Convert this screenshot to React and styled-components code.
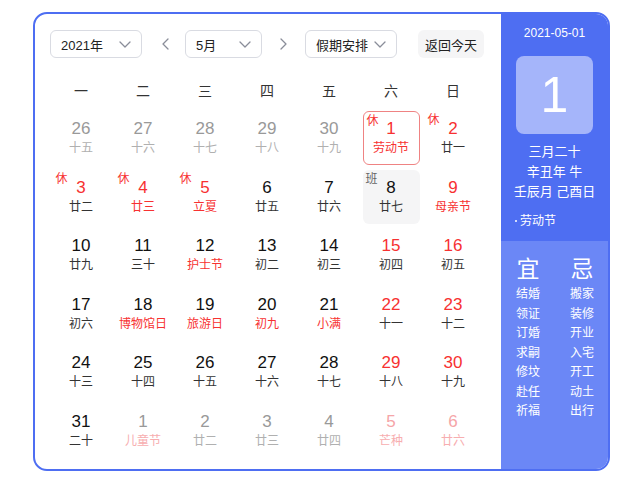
import React from "react";
import styled, { createGlobalStyle } from "styled-components";

const GlobalStyle = createGlobalStyle`
  html, body {
    margin: 0;
    padding: 0;
    background: #fff;
  }
  body {
    font-family: "Liberation Sans", "Noto Sans CJK SC", sans-serif;
    color: #222;
  }
`;

const RED = "#f73131";

const weekdays = ["一", "二", "三", "四", "五", "六", "日"];

// other = prev/next month; red = holiday/weekend number; lunarRed = festival text
const days = [
  { d: 26, l: "十五", other: true },
  { d: 27, l: "十六", other: true },
  { d: 28, l: "十七", other: true },
  { d: 29, l: "十八", other: true },
  { d: 30, l: "十九", other: true },
  { d: 1, l: "劳动节", red: true, lunarRed: true, tag: "休", selected: true },
  { d: 2, l: "廿一", red: true, tag: "休" },
  { d: 3, l: "廿二", red: true, tag: "休" },
  { d: 4, l: "廿三", red: true, lunarRed: true, tag: "休" },
  { d: 5, l: "立夏", red: true, lunarRed: true, tag: "休" },
  { d: 6, l: "廿五" },
  { d: 7, l: "廿六" },
  { d: 8, l: "廿七", tag: "班", work: true },
  { d: 9, l: "母亲节", red: true, lunarRed: true },
  { d: 10, l: "廿九" },
  { d: 11, l: "三十" },
  { d: 12, l: "护士节", lunarRed: true },
  { d: 13, l: "初二" },
  { d: 14, l: "初三" },
  { d: 15, l: "初四", red: true },
  { d: 16, l: "初五", red: true },
  { d: 17, l: "初六" },
  { d: 18, l: "博物馆日", lunarRed: true },
  { d: 19, l: "旅游日", lunarRed: true },
  { d: 20, l: "初九", lunarRed: true },
  { d: 21, l: "小满", lunarRed: true },
  { d: 22, l: "十一", red: true },
  { d: 23, l: "十二", red: true },
  { d: 24, l: "十三" },
  { d: 25, l: "十四" },
  { d: 26, l: "十五" },
  { d: 27, l: "十六" },
  { d: 28, l: "十七" },
  { d: 29, l: "十八", red: true },
  { d: 30, l: "十九", red: true },
  { d: 31, l: "二十" },
  { d: 1, l: "儿童节", other: true, lunarRed: true },
  { d: 2, l: "廿二", other: true },
  { d: 3, l: "廿三", other: true },
  { d: 4, l: "廿四", other: true },
  { d: 5, l: "芒种", other: true, red: true, lunarRed: true },
  { d: 6, l: "廿六", other: true, red: true, lunarRed: true },
];

const yi = ["结婚", "领证", "订婚", "求嗣", "修坟", "赴任", "祈福"];
const ji = ["搬家", "装修", "开业", "入宅", "开工", "动土", "出行"];

const Chevron = ({ dir = "down" }) => {
  const paths = {
    down: "M3 6l5 5 5-5",
    left: "M10 3L5 8l5 5",
    right: "M6 3l5 5-5 5",
  };
  return (
    <svg width="16" height="16" viewBox="0 0 16 16" fill="none">
      <path d={paths[dir]} stroke="#8a8d99" strokeWidth="1.3" strokeLinecap="round" strokeLinejoin="round" />
    </svg>
  );
};

const App = () => {
  return (
    <>
      <GlobalStyle />
      <Card>
        <Main>
          <Toolbar>
            <Select $w={92}>
              <span>2021年</span>
              <Chevron />
            </Select>
            <ArrowBtn $pad="left">
              <Chevron dir="left" />
            </ArrowBtn>
            <Select $w={77}>
              <span>5月</span>
              <Chevron />
            </Select>
            <ArrowBtn>
              <Chevron dir="right" />
            </ArrowBtn>
            <Select $w={92}>
              <span>假期安排</span>
              <Chevron />
            </Select>
            <TodayBtn>返回今天</TodayBtn>
          </Toolbar>

          <WeekHeader>
            {weekdays.map((w) => (
              <WeekCell key={w}>{w}</WeekCell>
            ))}
          </WeekHeader>

          <Grid>
            {days.map((day, i) => (
              <DayCell key={i} $selected={day.selected} $work={day.work}>
                {day.tag && <Tag $work={day.work}>{day.tag}</Tag>}
                <DayNum $red={day.red} $other={day.other}>
                  {day.d}
                </DayNum>
                <Lunar $red={day.lunarRed} $other={day.other}>
                  {day.l}
                </Lunar>
              </DayCell>
            ))}
          </Grid>
        </Main>

        <Side>
          <SideTop>
            <SideDate>2021-05-01</SideDate>
            <BigDay>1</BigDay>
            <SideLine>三月二十</SideLine>
            <SideLine>辛丑年 牛</SideLine>
            <SideLine>壬辰月 己酉日</SideLine>
            <Festival>
              <Dot />
              劳动节
            </Festival>
          </SideTop>
          <SideBottom>
            <Column>
              <ColHead>宜</ColHead>
              {yi.map((t) => (
                <ColItem key={t}>{t}</ColItem>
              ))}
            </Column>
            <Column>
              <ColHead>忌</ColHead>
              {ji.map((t) => (
                <ColItem key={t}>{t}</ColItem>
              ))}
            </Column>
          </SideBottom>
        </Side>
      </Card>
    </>
  );
};

const Card = styled.div`
  margin: 12px 0 0 33px;
  width: 577px;
  height: 459px;
  box-sizing: border-box;
  border: 2px solid #4e6ef2;
  border-radius: 14px;
  overflow: hidden;
  display: flex;
  background: #fff;
`;

const Main = styled.div`
  flex: 1;
  padding: 16px 0 0 15px;
`;

const Toolbar = styled.div`
  display: flex;
  align-items: center;
  height: 28px;
`;

const Select = styled.div`
  width: ${(p) => p.$w}px;
  height: 28px;
  box-sizing: border-box;
  border: 1px solid #d9dbe2;
  border-radius: 6px;
  display: flex;
  align-items: center;
  justify-content: space-between;
  padding: 0 8px 0 10px;
  font-size: 13px;
  color: #222;
`;

const ArrowBtn = styled.div`
  width: 43px;
  height: 28px;
  display: flex;
  align-items: center;
  justify-content: center;
  padding-left: ${(p) => (p.$pad === "left" ? "4px" : "0")};
  padding-right: ${(p) => (p.$pad === "left" ? "0" : "2px")};
  box-sizing: border-box;
`;

const TodayBtn = styled.div`
  margin-left: 21px;
  width: 66px;
  height: 28px;
  border-radius: 6px;
  background: #f5f5f6;
  display: flex;
  align-items: center;
  justify-content: center;
  font-size: 13px;
  color: #222;
`;

const WeekHeader = styled.div`
  display: grid;
  grid-template-columns: repeat(7, 62px);
  margin-top: 20px;
  height: 24px;
`;

const WeekCell = styled.div`
  display: flex;
  align-items: center;
  justify-content: center;
  font-size: 14px;
  color: #333;
`;

const Grid = styled.div`
  display: grid;
  grid-template-columns: repeat(7, 62px);
  grid-auto-rows: 54px;
  row-gap: 4.6px;
  margin-top: 9px;
`;

const DayCell = styled.div`
  position: relative;
  justify-self: center;
  width: 57px;
  height: 54px;
  box-sizing: border-box;
  border-radius: 6px;
  display: flex;
  flex-direction: column;
  align-items: center;
  padding-top: ${(p) => (p.$selected ? "6.5px" : "8px")};
  border: ${(p) => (p.$selected ? "1.5px solid #ef8383" : "none")};
  background: ${(p) => (p.$work ? "#f5f5f6" : "transparent")};
`;

const Tag = styled.span`
  position: absolute;
  top: 2px;
  left: 3px;
  font-size: 12px;
  line-height: 14px;
  color: ${(p) => (p.$work ? "#666" : RED)};
`;

const dayColor = (p) => {
  if (p.$other) return p.$red ? "#f5a5a8" : "#999";
  return p.$red ? RED : "#111";
};

const lunarColor = (p) => {
  if (p.$other) return p.$red ? "#f7aeb0" : "#b0b0b0";
  return p.$red ? RED : "#333";
};

const DayNum = styled.div`
  font-size: 17px;
  line-height: 20px;
  color: ${dayColor};
`;

const Lunar = styled.div`
  margin-top: 1px;
  font-size: 12px;
  line-height: 16px;
  white-space: nowrap;
  color: ${lunarColor};
`;

const Side = styled.div`
  width: 107px;
  display: flex;
  flex-direction: column;
  color: #fff;
`;

const SideTop = styled.div`
  height: 227px;
  box-sizing: border-box;
  background: #4e6ef2;
  display: flex;
  flex-direction: column;
  align-items: center;
  padding-top: 11px;
`;

const SideDate = styled.div`
  font-size: 12px;
  line-height: 16px;
`;

const BigDay = styled.div`
  margin-top: 15px;
  width: 77px;
  height: 78px;
  border-radius: 8px;
  background: #a5b5fa;
  display: flex;
  align-items: center;
  justify-content: center;
  font-size: 50px;
  line-height: 1;
  margin-bottom: 8px;
`;

const SideLine = styled.div`
  font-size: 13px;
  line-height: 20px;
  white-space: nowrap;
`;

const Festival = styled.div`
  align-self: flex-start;
  margin: 11px 0 0 14px;
  font-size: 12px;
  line-height: 16px;
  display: flex;
  align-items: center;
`;

const Dot = styled.span`
  width: 2px;
  height: 2px;
  background: #fff;
  margin-right: 3px;
  border-radius: 1px;
`;

const SideBottom = styled.div`
  flex: 1;
  background: #6b87f6;
  display: flex;
  justify-content: space-between;
  padding: 14px 13px 0 14px;
`;

const Column = styled.div`
  display: flex;
  flex-direction: column;
  align-items: center;
  width: 26px;
`;

const ColHead = styled.div`
  font-size: 23px;
  line-height: 28px;
  margin-bottom: 2px;
`;

const ColItem = styled.div`
  font-size: 12px;
  line-height: 19.5px;
  white-space: nowrap;
`;

export default App;
